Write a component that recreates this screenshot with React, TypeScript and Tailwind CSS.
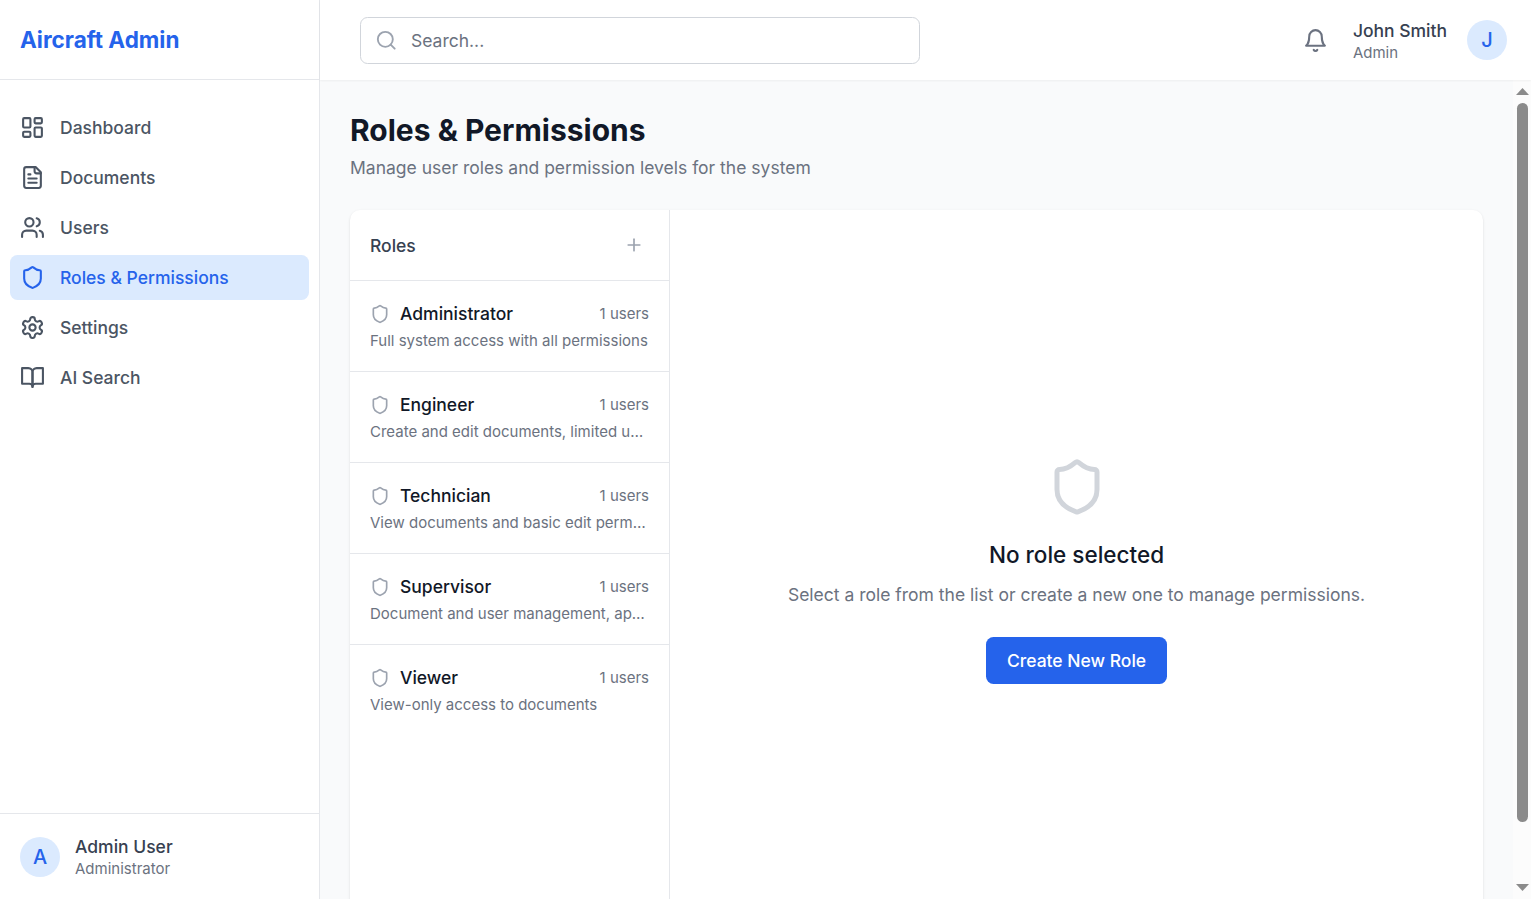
import React from "react";
import { LayoutDashboard, Shield, Plus } from "lucide-react";

type IconProps = { size?: number; className?: string };

function makeIcon(children: React.ReactNode) {
  return function Icon({ size = 24, className }: IconProps) {
    return (
      <svg
        width={size}
        height={size}
        viewBox="0 0 24 24"
        fill="none"
        stroke="currentColor"
        strokeWidth="2"
        strokeLinecap="round"
        strokeLinejoin="round"
        className={className}
      >
        {children}
      </svg>
    );
  };
}

const Bell = makeIcon(
  <>
    <path d="M6 8a6 6 0 0 1 12 0c0 7 3 9 3 9H3s3-2 3-9" />
    <path d="M10.3 21a1.94 1.94 0 0 0 3.4 0" />
  </>
);

const BookOpen = makeIcon(
  <>
    <path d="M2 3h6a4 4 0 0 1 4 4v14a3 3 0 0 0-3-3H2z" />
    <path d="M22 3h-6a4 4 0 0 0-4 4v14a3 3 0 0 1 3-3h7z" />
  </>
);

const Search = makeIcon(
  <>
    <circle cx="11" cy="11" r="8" />
    <path d="m21 21-4.3-4.3" />
  </>
);

const FileText = makeIcon(
  <>
    <path d="M15 2H6a2 2 0 0 0-2 2v16a2 2 0 0 0 2 2h12a2 2 0 0 0 2-2V7Z" />
    <path d="M14 2v4a2 2 0 0 0 2 2h4" />
    <path d="M10 9H8" />
    <path d="M16 13H8" />
    <path d="M16 17H8" />
  </>
);

const Users = makeIcon(
  <>
    <path d="M16 21v-2a4 4 0 0 0-4-4H6a4 4 0 0 0-4 4v2" />
    <circle cx="9" cy="7" r="4" />
    <path d="M22 21v-2a4 4 0 0 0-3-3.87" />
    <path d="M16 3.13a4 4 0 0 1 0 7.75" />
  </>
);

const Settings = makeIcon(
  <>
    <path d="M12.22 2h-.44a2 2 0 0 0-2 2v.18a2 2 0 0 1-1 1.73l-.43.25a2 2 0 0 1-2 0l-.15-.08a2 2 0 0 0-2.73.73l-.22.38a2 2 0 0 0 .73 2.73l.15.1a2 2 0 0 1 1 1.72v.51a2 2 0 0 1-1 1.74l-.15.09a2 2 0 0 0-.73 2.73l.22.38a2 2 0 0 0 2.73.73l.15-.08a2 2 0 0 1 2 0l.43.25a2 2 0 0 1 1 1.73V20a2 2 0 0 0 2 2h.44a2 2 0 0 0 2-2v-.18a2 2 0 0 1 1-1.73l.43-.25a2 2 0 0 1 2 0l.15.08a2 2 0 0 0 2.73-.73l.22-.39a2 2 0 0 0-.73-2.73l-.15-.08a2 2 0 0 1-1-1.74v-.5a2 2 0 0 1 1-1.74l.15-.09a2 2 0 0 0 .73-2.73l-.22-.38a2 2 0 0 0-2.73-.73l-.15.08a2 2 0 0 1-2 0l-.43-.25a2 2 0 0 1-1-1.73V4a2 2 0 0 0-2-2z" />
    <circle cx="12" cy="12" r="3" />
  </>
);

const navItems: { label: string; icon: React.ComponentType<IconProps>; active?: boolean }[] = [
  { label: "Dashboard", icon: LayoutDashboard },
  { label: "Documents", icon: FileText },
  { label: "Users", icon: Users },
  { label: "Roles & Permissions", icon: Shield, active: true },
  { label: "Settings", icon: Settings },
  { label: "AI Search", icon: BookOpen },
];

const roles = [
  { name: "Administrator", users: 1, description: "Full system access with all permissions" },
  { name: "Engineer", users: 1, description: "Create and edit documents, limited user management" },
  { name: "Technician", users: 1, description: "View documents and basic edit permissions" },
  { name: "Supervisor", users: 1, description: "Document and user management, approvals" },
  { name: "Viewer", users: 1, description: "View-only access to documents" },
];

function Avatar({ letter }: { letter: string }) {
  return (
    <div className="flex size-10 shrink-0 items-center justify-center rounded-full bg-[#dbeafe] text-[20px] leading-[30px] font-medium text-[#2563eb]">
      {letter}
    </div>
  );
}

function Person({ name, role }: { name: string; role: string }) {
  return (
    <div>
      <p className="text-[17.5px] leading-[25px] font-medium text-[#374151]">{name}</p>
      <p className="text-[15px] leading-5 text-[#6b7280]">{role}</p>
    </div>
  );
}

function Sidebar() {
  return (
    <aside className="flex w-80 shrink-0 flex-col border-r border-[#e5e7eb] bg-white">
      <div className="flex h-20 shrink-0 items-center border-b border-[#e5e7eb] px-5">
        <h1 className="text-[22.5px] leading-[35px] font-bold text-[#2563eb]">Aircraft Admin</h1>
      </div>
      <nav className="flex flex-1 flex-col gap-[5px] px-2.5 pt-[25px]">
        {navItems.map(({ label, icon: Icon, active }) => (
          <a
            key={label}
            className={
              active
                ? "flex items-center gap-[15px] rounded-[7.5px] bg-[#dbeafe] px-2.5 py-2.5 text-[17.5px] leading-[25px] font-medium text-[#2563eb]"
                : "flex items-center gap-[15px] rounded-[7.5px] px-2.5 py-2.5 text-[17.5px] leading-[25px] font-medium text-[#4b5563]"
            }
          >
            <Icon size={25} />
            {label}
          </a>
        ))}
      </nav>
      <div className="flex h-[86px] shrink-0 items-center gap-[15px] border-t border-[#e5e7eb] px-5">
        <Avatar letter="A" />
        <Person name="Admin User" role="Administrator" />
      </div>
    </aside>
  );
}

function TopBar() {
  return (
    <header className="z-10 flex h-20 shrink-0 items-center justify-between bg-white pr-6 pl-10 shadow-[0_1px_2px_0_rgba(0,0,0,0.05)]">
      <div className="flex h-[47px] w-[560px] items-center gap-[13.5px] rounded-[7.5px] border border-[#d1d5db] pl-3.5">
        <Search size={22.5} className="text-[#9ca3af]" />
        <span className="text-[17.5px] leading-[25px] text-[#6b7280]">Search...</span>
      </div>
      <div className="flex items-center">
        <Bell size={25} className="mr-[25px] text-[#6b7280]" />
        <Person name="John Smith" role="Admin" />
        <div className="ml-5">
          <Avatar letter="J" />
        </div>
      </div>
    </header>
  );
}

function RoleList() {
  return (
    <section className="w-80 shrink-0 border-r border-[#e5e7eb]">
      <div className="flex h-[71px] items-center justify-between border-b border-[#e5e7eb] pr-[25px] pl-5">
        <h3 className="text-[17.5px] leading-[25px] font-medium text-[#374151]">Roles</h3>
        <Plus size={20} className="text-[#9ca3af]" />
      </div>
      <ul className="divide-y divide-[#e5e7eb]">
        {roles.map((role) => (
          <li key={role.name} className="p-5">
            <div className="flex items-center">
              <Shield size={20} className="mr-2.5 text-[#9ca3af]" />
              <span className="flex-1 text-[17.5px] leading-[25px] font-medium text-[#111827]">{role.name}</span>
              <span className="text-[15px] leading-5 text-[#6b7280]">{role.users} users</span>
            </div>
            <p className="mt-[5px] truncate text-[15px] leading-5 text-[#6b7280]">{role.description}</p>
          </li>
        ))}
      </ul>
    </section>
  );
}

function EmptyState() {
  return (
    <section className="flex flex-1 flex-col items-center justify-center">
      <Shield size={60} className="text-[#d1d5db]" />
      <h3 className="mt-5 text-[22.5px] leading-[35px] font-medium text-[#111827]">No role selected</h3>
      <p className="mt-2.5 text-[17.5px] leading-[25px] text-[#6b7280]">
        Select a role from the list or create a new one to manage permissions.
      </p>
      <button className="mt-[30px] h-[47px] w-[181px] rounded-[7.5px] bg-[#2563eb] text-[17.5px] leading-[25px] font-medium text-white">
        Create New Role
      </button>
    </section>
  );
}

function ScrollTrack() {
  return (
    <div className="flex w-[18px] shrink-0 flex-col items-center bg-[#fcfcfc] pt-2 pb-2 pl-px">
      <svg width="13" height="7" className="shrink-0" fill="#8b8b8b">
        <path d="M6.5 0 13 7H0z" />
      </svg>
      <div className="mt-2 h-[719px] w-[11px] shrink-0 rounded-full bg-[#8b8b8b]" />
      <svg width="13" height="7" className="mt-auto shrink-0" fill="#8b8b8b">
        <path d="M0 0h13L6.5 7z" />
      </svg>
    </div>
  );
}

export default function App() {
  return (
    <div className="flex h-[899px] overflow-hidden bg-[#f9fafb] font-['Inter',sans-serif]">
      <Sidebar />
      <div className="flex min-w-0 flex-1 flex-col">
        <TopBar />
        <div className="flex min-h-0 flex-1">
          <main className="min-w-0 flex-1 overflow-hidden p-[30px]">
            <h2 className="text-[30px] leading-10 font-bold text-[#111827]">Roles &amp; Permissions</h2>
            <p className="mt-[5px] text-[17.5px] leading-[25px] text-[#6b7280]">
              Manage user roles and permission levels for the system
            </p>
            <div className="mt-[30px] flex h-[721px] rounded-[10px] bg-white shadow-[0_1px_3px_0_rgba(0,0,0,0.1),0_1px_2px_-1px_rgba(0,0,0,0.1)]">
              <RoleList />
              <EmptyState />
            </div>
          </main>
          <ScrollTrack />
        </div>
      </div>
    </div>
  );
}
